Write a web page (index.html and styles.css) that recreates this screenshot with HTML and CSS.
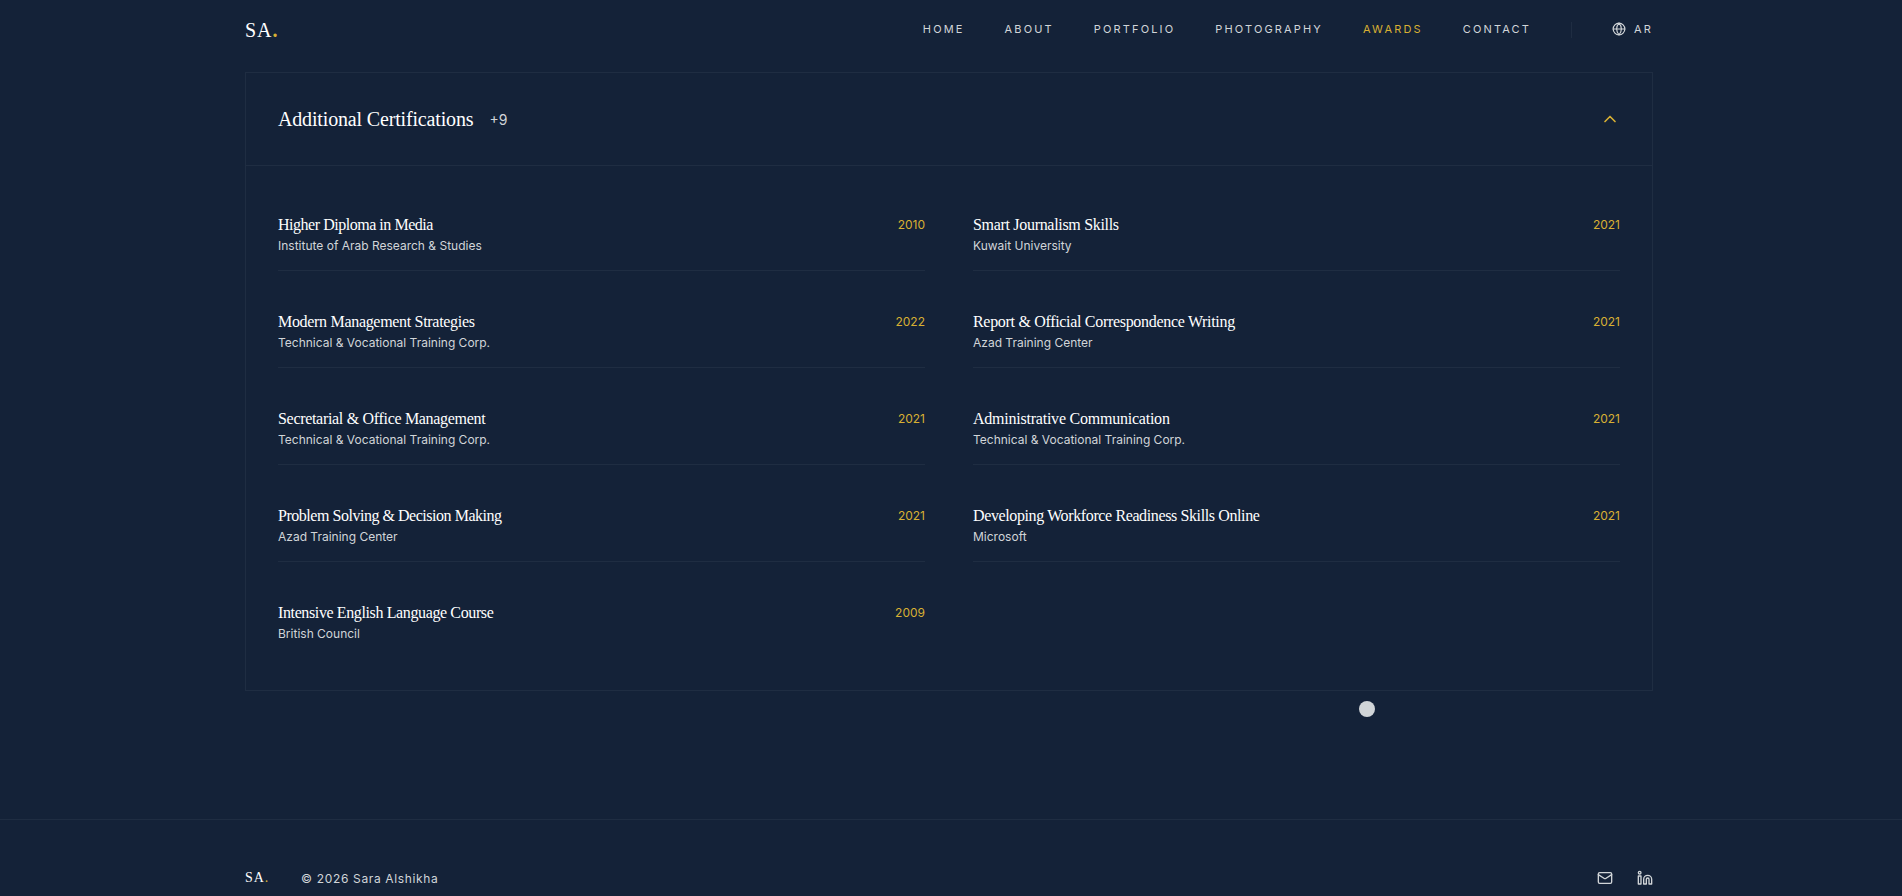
FILE: index.html
```
<!DOCTYPE html>
<html lang="en">
<head>
    <meta charset="UTF-8">
    <meta name="viewport" content="width=device-width, initial-scale=1.0">
    <title>Sara Alshikha - Awards</title>
    <link rel="stylesheet" href="styles.css">
</head>
<body>
    <header class="header">
        <div class="container header-inner">
            <a class="logo">SA<span class="dot">.</span></a>
            <nav class="nav">
                <a>Home</a>
                <a>About</a>
                <a>Portfolio</a>
                <a>Photography</a>
                <a class="active">Awards</a>
                <a>Contact</a>
                <span class="divider"></span>
                <a class="lang">
                    <svg class="icon-globe" viewBox="0 0 24 24"><circle cx="12" cy="12" r="10"/><path d="M12 2a14.5 14.5 0 0 0 0 20 14.5 14.5 0 0 0 0-20"/><path d="M2 12h20"/></svg>
                    <span>AR</span>
                </a>
            </nav>
        </div>
    </header>

    <main class="container">
        <section class="card">
            <div class="card-header">
                <div class="card-title">
                    <h2>Additional Certifications</h2>
                    <span class="count">+9</span>
                </div>
                <svg class="icon-chevron" viewBox="0 0 24 24"><path d="m18 15-6-6-6 6"/></svg>
            </div>
            <div class="cert-grid">
                <div class="cert tight">
                    <div><h3>Higher Diploma in Media</h3><p>Institute of Arab Research &amp; Studies</p></div>
                    <span class="year">2010</span>
                </div>
                <div class="cert">
                    <div><h3>Smart Journalism Skills</h3><p>Kuwait University</p></div>
                    <span class="year">2021</span>
                </div>
                <div class="cert">
                    <div><h3>Modern Management Strategies</h3><p>Technical &amp; Vocational Training Corp.</p></div>
                    <span class="year">2022</span>
                </div>
                <div class="cert">
                    <div><h3>Report &amp; Official Correspondence Writing</h3><p>Azad Training Center</p></div>
                    <span class="year">2021</span>
                </div>
                <div class="cert">
                    <div><h3>Secretarial &amp; Office Management</h3><p>Technical &amp; Vocational Training Corp.</p></div>
                    <span class="year">2021</span>
                </div>
                <div class="cert loose">
                    <div><h3>Administrative Communication</h3><p>Technical &amp; Vocational Training Corp.</p></div>
                    <span class="year">2021</span>
                </div>
                <div class="cert tight">
                    <div><h3>Problem Solving &amp; Decision Making</h3><p>Azad Training Center</p></div>
                    <span class="year">2021</span>
                </div>
                <div class="cert snug">
                    <div><h3>Developing Workforce Readiness Skills Online</h3><p>Microsoft</p></div>
                    <span class="year">2021</span>
                </div>
                <div class="cert snug">
                    <div><h3>Intensive English Language Course</h3><p>British Council</p></div>
                    <span class="year">2009</span>
                </div>
            </div>
        </section>
    </main>

    <footer class="footer">
        <div class="container footer-inner">
            <div class="footer-left">
                <span class="footer-logo">SA<span class="dot">.</span></span>
                <span class="copyright">© 2026 Sara Alshikha</span>
            </div>
            <div class="social">
                <svg viewBox="0 0 24 24"><rect width="20" height="16" x="2" y="4" rx="2"/><path d="m22 7-8.97 5.7a1.94 1.94 0 0 1-2.06 0L2 7"/></svg>
                <svg viewBox="0 0 24 24"><path d="M16 8a6 6 0 0 1 6 6v7h-4v-7a2 2 0 0 0-2-2 2 2 0 0 0-2 2v7h-4v-7a6 6 0 0 1 6-6z"/><rect width="4" height="12" x="2" y="9"/><circle cx="4" cy="4" r="2"/></svg>
            </div>
        </div>
    </footer>

    <div class="cursor"></div>
</body>
</html>
```

FILE: styles.css
```
* {
    box-sizing: border-box;
    margin: 0;
    padding: 0;
}

body {
    height: 896px;
    padding-right: 4px;
    overflow: hidden;
    background-color: #142238;
    color: #d1d5d8;
    font-family: Inter, sans-serif;
}

h2, h3, .logo, .footer-logo {
    font-family: 'Liberation Serif', serif;
    font-weight: 400;
    color: #fff;
}

svg {
    fill: none;
    stroke: currentColor;
    stroke-width: 2;
    stroke-linecap: round;
    stroke-linejoin: round;
    flex-shrink: 0;
}

.container {
    width: 1408px;
    margin: 0 auto;
}

.header {
    height: 72px;
}

.header-inner {
    height: 58px;
    display: flex;
    align-items: center;
    justify-content: space-between;
}

.logo {
    padding-top: 2px;
    font-size: 20px;
    letter-spacing: 1px;
}

.logo .dot, .footer-logo .dot {
    color: #d8b033;
}

.logo .dot {
    font-weight: 700;
}

.nav {
    display: flex;
    align-items: center;
    gap: 40px;
    font-size: 11px;
    letter-spacing: 2.15px;
    text-transform: uppercase;
}

.nav .active {
    color: #d8b033;
}

.divider {
    width: 1px;
    height: 16px;
    margin-top: 2px;
    background-color: #1f2d42;
}

.lang {
    display: flex;
    align-items: center;
    gap: 8px;
}

.icon-globe {
    width: 14px;
    height: 14px;
}

.card {
    height: 619px;
    border: 1px solid #1f2d42;
}

.card-header {
    height: 93px;
    padding: 0 32px;
    display: flex;
    align-items: center;
    justify-content: space-between;
    border-bottom: 1px solid #1f2d42;
}

.card-title {
    display: flex;
    align-items: center;
    gap: 16px;
}

.card-title h2 {
    font-size: 20px;
    letter-spacing: -0.16px;
}

.count {
    font-size: 14px;
}

.icon-chevron {
    width: 20px;
    height: 20px;
    color: #d8b033;
}

.cert-grid {
    padding: 32px;
    display: grid;
    grid-template-columns: 1fr 1fr;
    column-gap: 48px;
    row-gap: 24px;
}

.cert {
    height: 73px;
    padding-top: 17px;
    display: flex;
    justify-content: space-between;
    border-bottom: 1px solid #1f2d42;
}

.cert:last-child {
    border-bottom: none;
}

.cert h3 {
    font-size: 16px;
    line-height: 20px;
    letter-spacing: -0.31px;
}

.cert.tight h3 {
    letter-spacing: -0.47px;
}

.cert.snug h3 {
    letter-spacing: -0.38px;
}

.cert.loose h3 {
    letter-spacing: -0.23px;
}

.cert p {
    margin-top: 3px;
    font-size: 12px;
    line-height: 16px;
}

.year {
    color: #d8b033;
    font-size: 12px;
    line-height: 20px;
}

.footer {
    margin-top: 128px;
    margin-right: -4px;
    padding-right: 4px;
    border-top: 1px solid #1f2d42;
}

.footer-inner {
    height: 116px;
    display: flex;
    align-items: center;
    justify-content: space-between;
}

.footer-left {
    display: flex;
    align-items: center;
    gap: 32px;
}

.footer-logo {
    font-size: 14px;
    letter-spacing: 0.9px;
}

.copyright {
    font-size: 12px;
    letter-spacing: 0.65px;
}

.social {
    display: flex;
    gap: 24px;
}

.social svg {
    width: 16px;
    height: 16px;
}

/* custom pointer */
.cursor {
    position: absolute;
    left: 1359px;
    top: 701px;
    width: 16px;
    height: 16px;
    border-radius: 50%;
    background-color: #d1d5d8;
    pointer-events: none;
}
```
